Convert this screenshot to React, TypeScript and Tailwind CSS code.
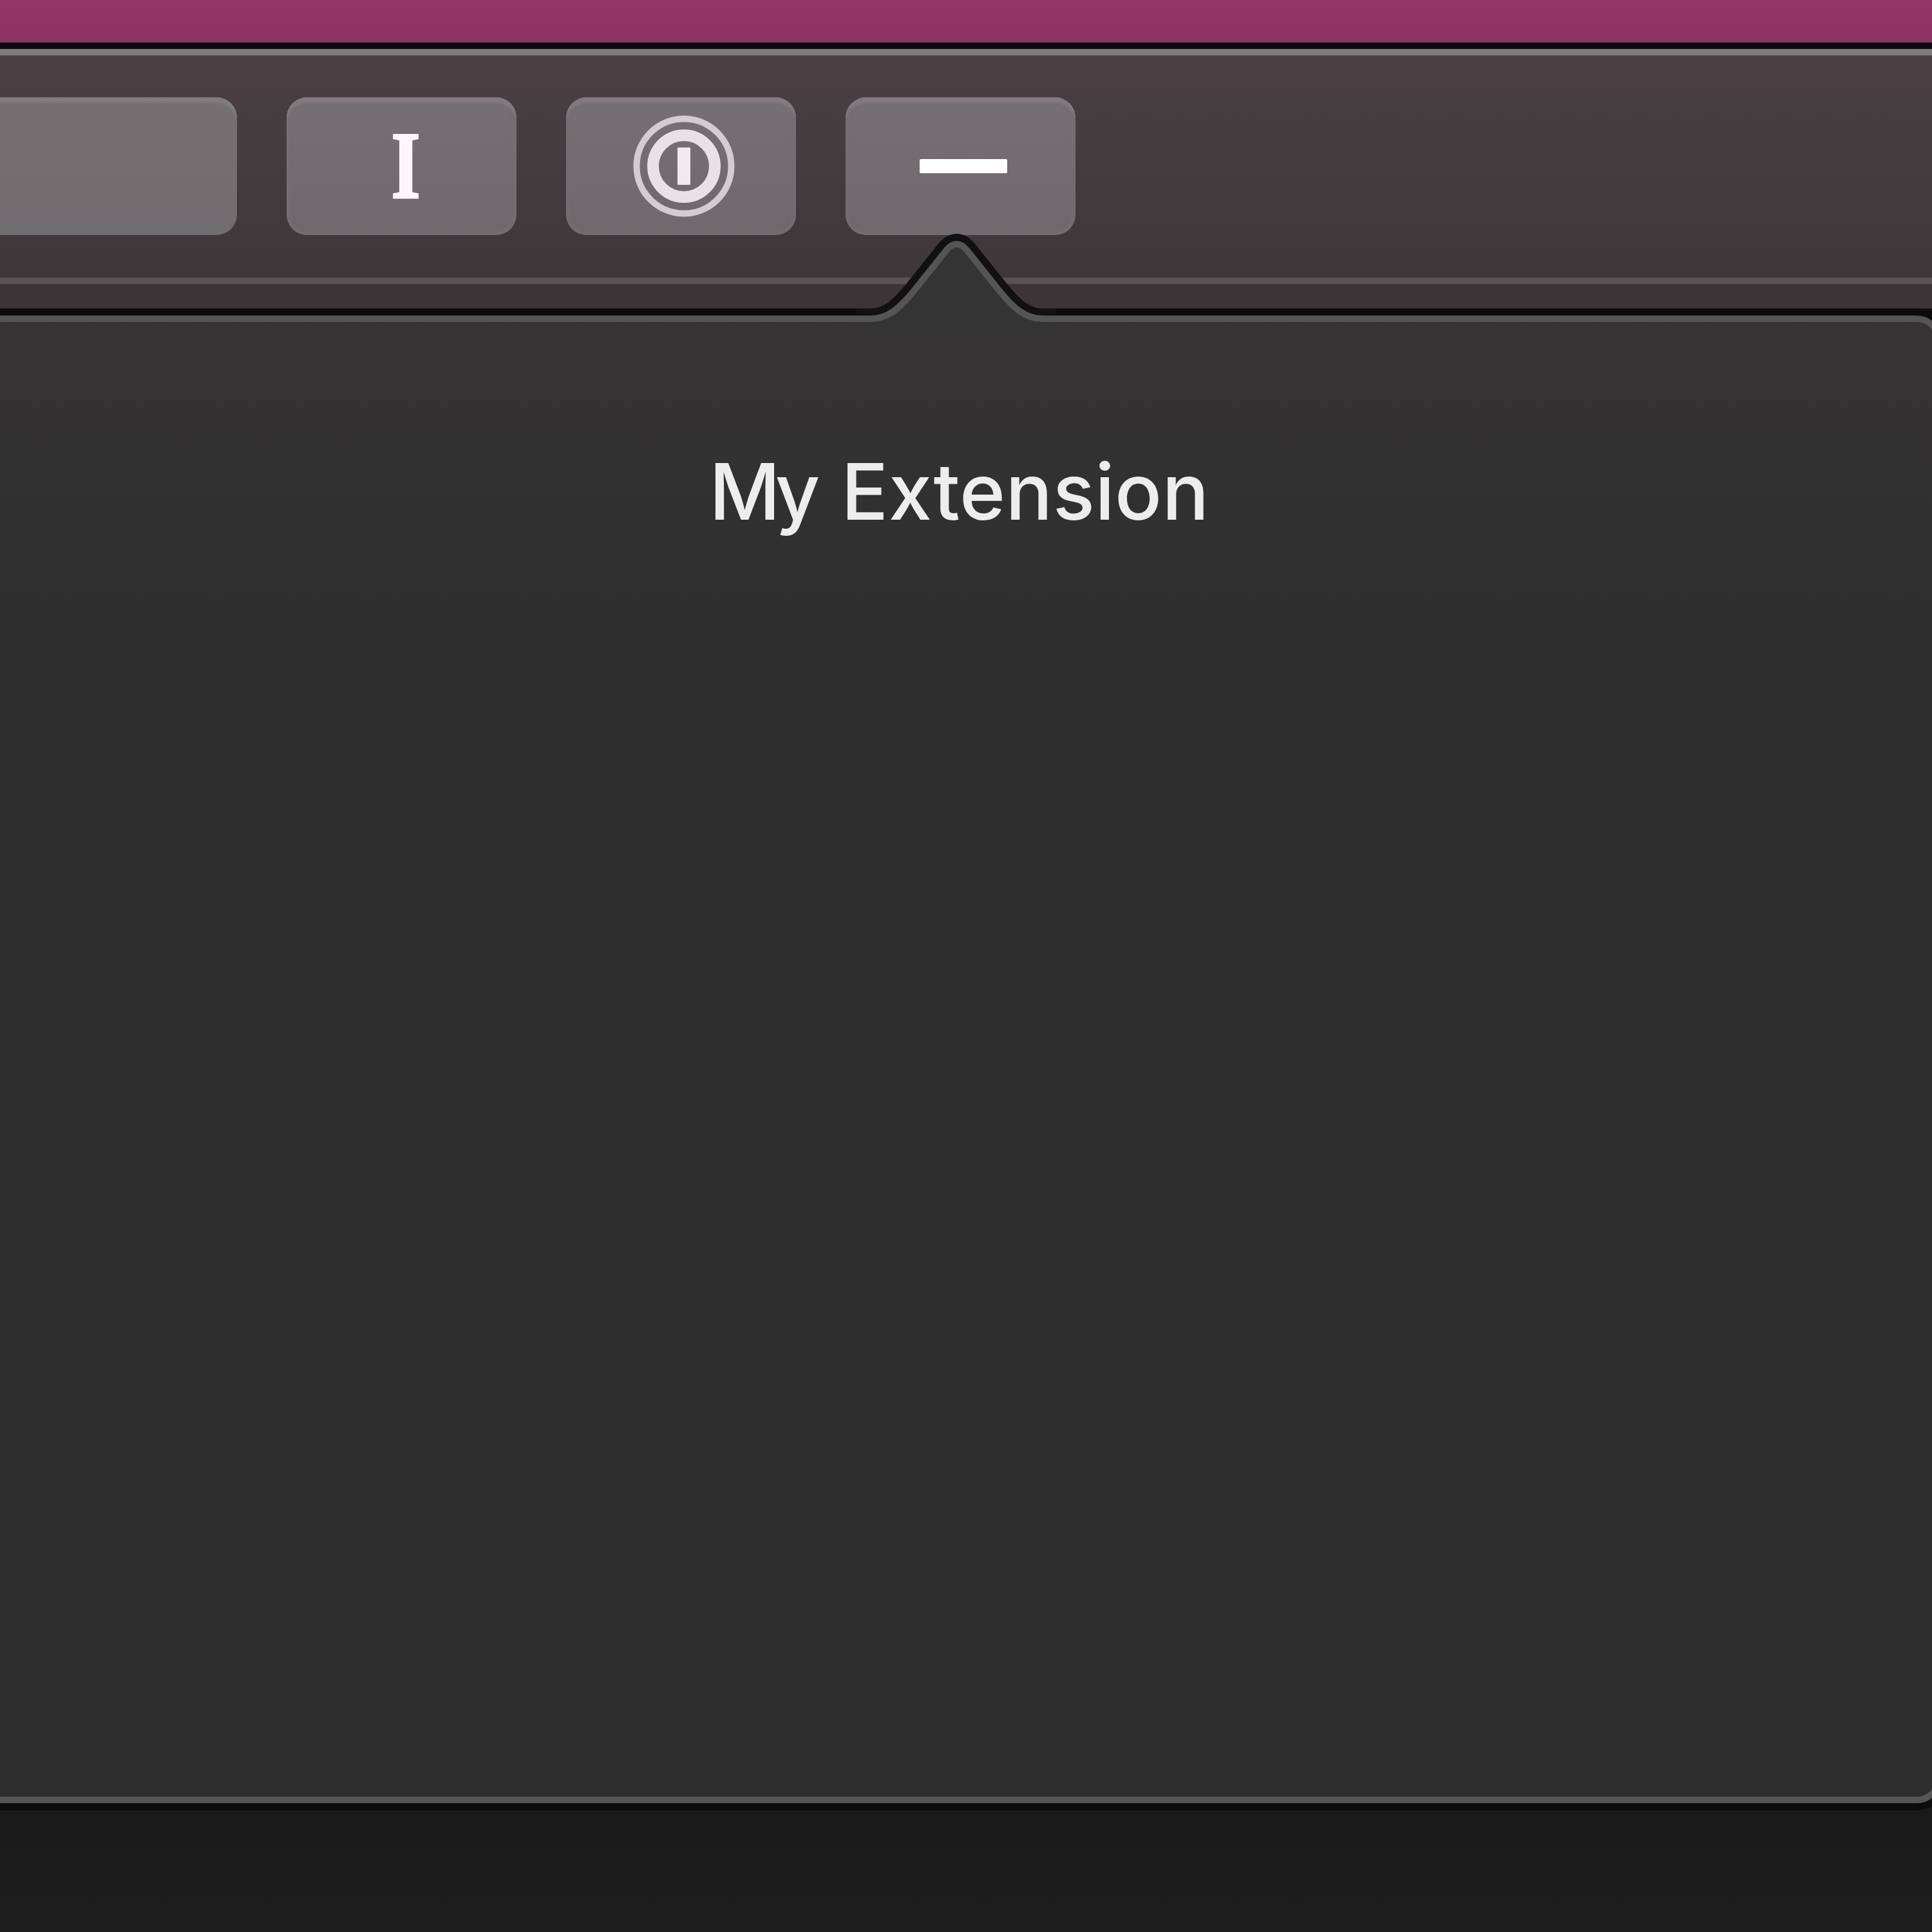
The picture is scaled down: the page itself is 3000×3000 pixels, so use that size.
import { type ReactNode } from "react";

function ToolbarButton({ label, children }: { label: string; children: ReactNode }) {
  return (
    <button
      aria-label={label}
      className="flex h-[214px] w-[357px] shrink-0 items-center justify-center rounded-[32px] bg-gradient-to-b from-[#766f73] to-[#6f686c] text-white shadow-[inset_0_11px_3px_-2px_#83797e,inset_0_0_8px_2px_#777074]"
    >
      {children}
    </button>
  );
}

function VaultIcon() {
  return (
    <svg className="ml-[8px] h-[160px] w-[160px]" viewBox="0 0 160 160" fill="none">
      <circle cx="80" cy="80" r="73.5" stroke="#d3ccd0" strokeWidth="10" />
      <circle cx="80" cy="80" r="48" stroke="#e9e1e6" strokeWidth="18" />
      <rect x="70" y="51" width="20" height="58" rx="1" fill="#f0e9ee" />
    </svg>
  );
}

function Toolbar() {
  return (
    <header className="h-[413px] shrink-0 border-t-[10px] border-[#120710]">
      <div className="flex h-[365px] items-start gap-[77px] border-t-[10px] border-b-[10px] border-t-[#7f7a7d] border-b-[#595255] bg-gradient-to-b from-[#4a4044] to-[#3e3739] bg-origin-border pt-[65px]">
        <div className="h-[214px] w-[368px] shrink-0 rounded-r-[32px] bg-gradient-to-b from-[#757172] to-[#716c6f] shadow-[inset_0_11px_3px_-2px_#807b7e]" />
        <div className="flex gap-[77px]">
          <ToolbarButton label="Reader">
            <span className="mb-[3px] ml-[12px] inline-block scale-x-[0.78] font-['Liberation_Serif',serif] text-[149px] leading-none font-bold text-[#fdf6fb] [-webkit-text-stroke:3px_#fdf6fb]">
              I
            </span>
          </ToolbarButton>
          <ToolbarButton label="Passwords">
            <VaultIcon />
          </ToolbarButton>
          <ToolbarButton label="My Extension">
            <span className="ml-[8px] h-[22px] w-[136px] rounded-[2px] bg-white" />
          </ToolbarButton>
        </div>
      </div>
      <div className="h-[38px] bg-[#3c3538]" />
    </header>
  );
}

function PopoverArrow() {
  const edge =
    "M1330 495 H1352 C1380 495 1399 476 1418 453 L1470 388 Q1485.500 370 1501 388 L1553 453 C1572 476 1591 495 1619 495 H1640";
  return (
    <svg
      className="pointer-events-none absolute -top-[140px] left-[1360px] h-[150px] w-[310px]"
      viewBox="1330 360 310 150"
      fill="none"
    >
      <path d={edge} stroke="#121012" strokeWidth="32" />
      <path d={edge + " V510 H1330 Z"} fill="#353435" />
      <path d={edge} stroke="#565556" strokeWidth="10" />
    </svg>
  );
}

function Popover() {
  return (
    <section className="relative -ml-10 h-[2310px] w-[3056px] shrink-0 rounded-[40px] border-[10px] border-[#565556] bg-[#2d2d2d] bg-gradient-to-b from-[#363435] via-[#2f2e2f] via-20% to-[#2d2d2d] to-40% bg-origin-border shadow-[0_0_0_11px_#0d0c0d]">
      <PopoverArrow />
      <p className="ml-[30px] w-[2979px] pt-[188px] text-center font-[Inter,sans-serif] text-[121px] leading-[150px] font-[450] tracking-[0.4px] text-[#ededed]">
        <span className="tracking-[-8px]">M</span>y Extension
      </p>
    </section>
  );
}

export default function App() {
  return (
    <main className="flex h-[3000px] w-[3000px] flex-col overflow-hidden bg-gradient-to-b from-[#1a1a1a] from-94% to-[#1f1f1f]">
      <div className="h-[66px] shrink-0 bg-gradient-to-b from-[#953569] to-[#8e3364]" />
      <Toolbar />
      <div className="h-[11px] shrink-0 bg-[#100e10]" />
      <Popover />
    </main>
  );
}
